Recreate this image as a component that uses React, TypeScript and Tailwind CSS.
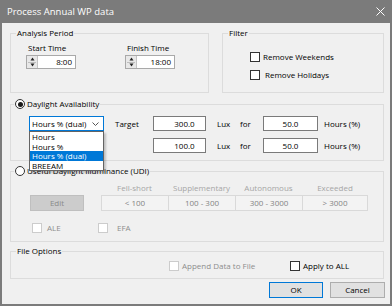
import React from "react";

function Group({
  legend,
  className,
  children,
}: {
  legend: React.ReactNode;
  className: string;
  children?: React.ReactNode;
}) {
  return (
    <fieldset className={`border border-[#dcdcdc] ${className}`}>
      <legend className="ml-[5px] px-[1px] leading-[12px]">{legend}</legend>
      {children}
    </fieldset>
  );
}

function Box({ disabled }: { disabled?: boolean }) {
  return (
    <span
      className={
        disabled
          ? "inline-block w-[10px] h-[10px] shrink-0 border border-[#cccccc] bg-white"
          : "inline-block w-[10px] h-[10px] shrink-0 border border-[#333333] bg-white"
      }
    />
  );
}

function Radio({ checked }: { checked?: boolean }) {
  return (
    <span className="w-[10px] h-[10px] shrink-0 rounded-full border border-[#333333] bg-white flex items-center justify-center">
      {checked && <span className="w-[5px] h-[5px] rounded-full bg-[#1a1a1a]" />}
    </span>
  );
}

function TimeField({ label, value }: { label: string; value: string }) {
  return (
    <div className="flex flex-col">
      <span className="pl-[2px] h-[12px]">{label}</span>
      <div className="mt-[1px] w-[50px] h-[14px] flex border border-[#a9a9a9] bg-white">
        <div className="w-[11px] bg-[#e8e8e8] border-r border-[#c4c4c4] flex flex-col items-center justify-center">
          <svg width="5" height="4" viewBox="0 0 5 4">
            <path d="M2.5 0.5 L4.5 3.5 L0.5 3.5 Z" fill="#222" />
          </svg>
          <span className="w-[8px] h-px bg-[#bdbdbd] my-[0.5px]" />
          <svg width="5" height="4" viewBox="0 0 5 4">
            <path d="M0.5 0.5 L4.5 0.5 L2.5 3.5 Z" fill="#222" />
          </svg>
        </div>
        <div className="flex-1 text-right pr-[3px] leading-[12px]">{value}</div>
      </div>
    </div>
  );
}

function Field({ value, className }: { value: string; className: string }) {
  return (
    <div
      className={`h-[15px] border border-[#7a7a7a] bg-white leading-[13px] text-center ${className}`}
    >
      {value}
    </div>
  );
}

export default function App() {
  return (
    <div className="w-[392px] h-[306px] flex flex-col overflow-hidden font-['Open_Sans','Noto_Sans',sans-serif] text-[8px] leading-[12px] text-black">
      <div className="h-[23px] shrink-0 bg-[#7b7b7b] flex items-center justify-between pl-[7px] pr-[7px]">
        <span className="text-white text-[9.5px]">Process Annual WP data</span>
        <svg width="9" height="9" viewBox="0 0 9 9">
          <path d="M0.5 0.5 L8.5 8.5 M8.5 0.5 L0.5 8.5" stroke="white" strokeWidth="1" />
        </svg>
      </div>
      <div className="flex-1 bg-[#f0f0f0] border-x-2 border-b-2 border-[#7b7b7b] pl-[8px] pr-[6px] pt-[4px] flex flex-col">
        {/* Row 1 */}
        <div className="flex gap-[13px]">
          <Group legend="Analysis Period" className="w-[199px] h-[66px]">
            <div className="flex pl-[15px] pt-[3px] gap-[49px]">
              <TimeField label="Start Time" value="8:00" />
              <TimeField label="Finish Time" value="18:00" />
            </div>
          </Group>
          <Group legend="Filter" className="flex-1 h-[66px]">
            <div className="pl-[27px] pt-[12px] flex flex-col gap-[6px]">
              <div className="flex items-center h-[12px]">
                <Box />
                <span className="ml-[3px]">Remove Weekends</span>
              </div>
              <div className="flex items-center h-[12px]">
                <Box />
                <span className="ml-[5px]">Remove Holidays</span>
              </div>
            </div>
          </Group>
        </div>

        {/* Daylight Availability */}
        <fieldset className="mt-[5px] h-[63px] border border-[#dcdcdc]">
          <legend className="ml-[3px] px-[1px] leading-[12px]">
            <span className="flex items-center gap-[2px]">
              <Radio checked />
              <span>Daylight Availability</span>
            </span>
          </legend>
          <div className="mt-[6px] pl-[18px] grid grid-cols-[75px_49px_53px_34px_23px_55px_auto] grid-rows-[15px_15px] gap-y-[7px] items-center">
            <div className="relative h-[15px]">
              <div className="h-[15px] border border-[#0078d7] bg-white flex items-center justify-between pl-[2px] pr-[4px]">
                <span className="leading-[13px] whitespace-nowrap">Hours % (dual)</span>
                <svg width="7" height="4" viewBox="0 0 7 4">
                  <path d="M0.5 0.5 L3.5 3.5 L6.5 0.5" stroke="#555" strokeWidth="1" fill="none" />
                </svg>
              </div>
              <div className="absolute z-10 left-0 top-[15px] w-[75px] border border-[#646464] bg-white shadow-[2px_2px_2px_rgba(0,0,0,0.2)] flex flex-col">
                <span className="h-[9.5px] leading-[9.5px] pl-[2px] whitespace-nowrap">Hours</span>
                <span className="h-[9.5px] leading-[9.5px] pl-[2px] whitespace-nowrap">Hours %</span>
                <span className="h-[9.5px] leading-[9.5px] pl-[2px] whitespace-nowrap bg-[#0078d7] text-white">Hours % (dual)</span>
                <span className="h-[9.5px] leading-[9.5px] pl-[2px] whitespace-nowrap">BREEAM</span>
              </div>
            </div>
            <span className="pl-[11px]">Target</span>
            <Field value="300.0" className="pl-[10px]" />
            <span className="pl-[11px]">Lux</span>
            <span>for</span>
            <Field value="50.0" className="" />
            <span className="pl-[6px]">Hours (%)</span>

            <span />
            <span />
            <Field value="100.0" className="pl-[10px]" />
            <span className="pl-[11px]">Lux</span>
            <span>for</span>
            <Field value="50.0" className="" />
            <span className="pl-[6px]">Hours (%)</span>
          </div>
        </fieldset>

        {/* UDI */}
        <fieldset className="mt-[4px] h-[77px] border border-[#dcdcdc]">
          <legend className="ml-[3px] px-[1px] leading-[12px]">
            <span className="flex items-center gap-[2px]">
              <Radio />
              <span>Useful Daylight Illuminance (UDI)</span>
            </span>
          </legend>
          <div className="mt-[5px] ml-[90px] grid grid-cols-[67px_67px_67px_66px] h-[12px] text-[#a6a6a6] text-center">
            <span>Fell-short</span>
            <span>Supplementary</span>
            <span>Autonomous</span>
            <span>Exceeded</span>
          </div>
          <div className="mt-[1px] pl-[19px] flex h-[16px]">
            <div className="w-[54px] h-[16px] bg-[#cccccc] border border-[#bfbfbf] text-[#8a8a8a] flex items-center justify-center">
              Edit
            </div>
            <div className="ml-[17px] grid grid-cols-[67px_67px_67px_66px] text-[#838383] text-center leading-[14px]">
              <span className="border-y border-l border-[#d9d9d9] bg-[#f3f3f3]">&lt; 100</span>
              <span className="border-y border-l border-[#d9d9d9] bg-[#f3f3f3]">100 - 300</span>
              <span className="border-y border-l border-[#d9d9d9] bg-[#f3f3f3]">300 - 3000</span>
              <span className="border border-[#d9d9d9] bg-[#f3f3f3]">&gt; 3000</span>
            </div>
          </div>
          <div className="mt-[11px] pl-[21px] flex items-center h-[12px] text-[#8d8d8d]">
            <Box disabled />
            <span className="ml-[5px] w-[51px]">ALE</span>
            <Box disabled />
            <span className="ml-[9px]">EFA</span>
          </div>
        </fieldset>

        {/* File Options */}
        <Group legend="File Options" className="mt-[3px] h-[34px]">
          <div className="mt-[3px] pl-[158px] flex items-center h-[12px]">
            <div className="w-[121px] flex items-center text-[#8d8d8d]">
              <Box disabled />
              <span className="ml-[3px]">Append Data to File</span>
            </div>
            <Box />
            <span className="ml-[3px]">Apply to ALL</span>
          </div>
        </Group>

        {/* Buttons */}
        <div className="mt-[3px] -mr-[1px] flex justify-end gap-[7px]">
          <div className="w-[54px] h-[16px] border border-[#0078d7] bg-[#e1e1e1] flex items-center justify-center">
            OK
          </div>
          <div className="w-[55px] h-[16px] border border-[#adadad] bg-[#e1e1e1] flex items-center justify-center">
            Cancel
          </div>
        </div>
      </div>
    </div>
  );
}
